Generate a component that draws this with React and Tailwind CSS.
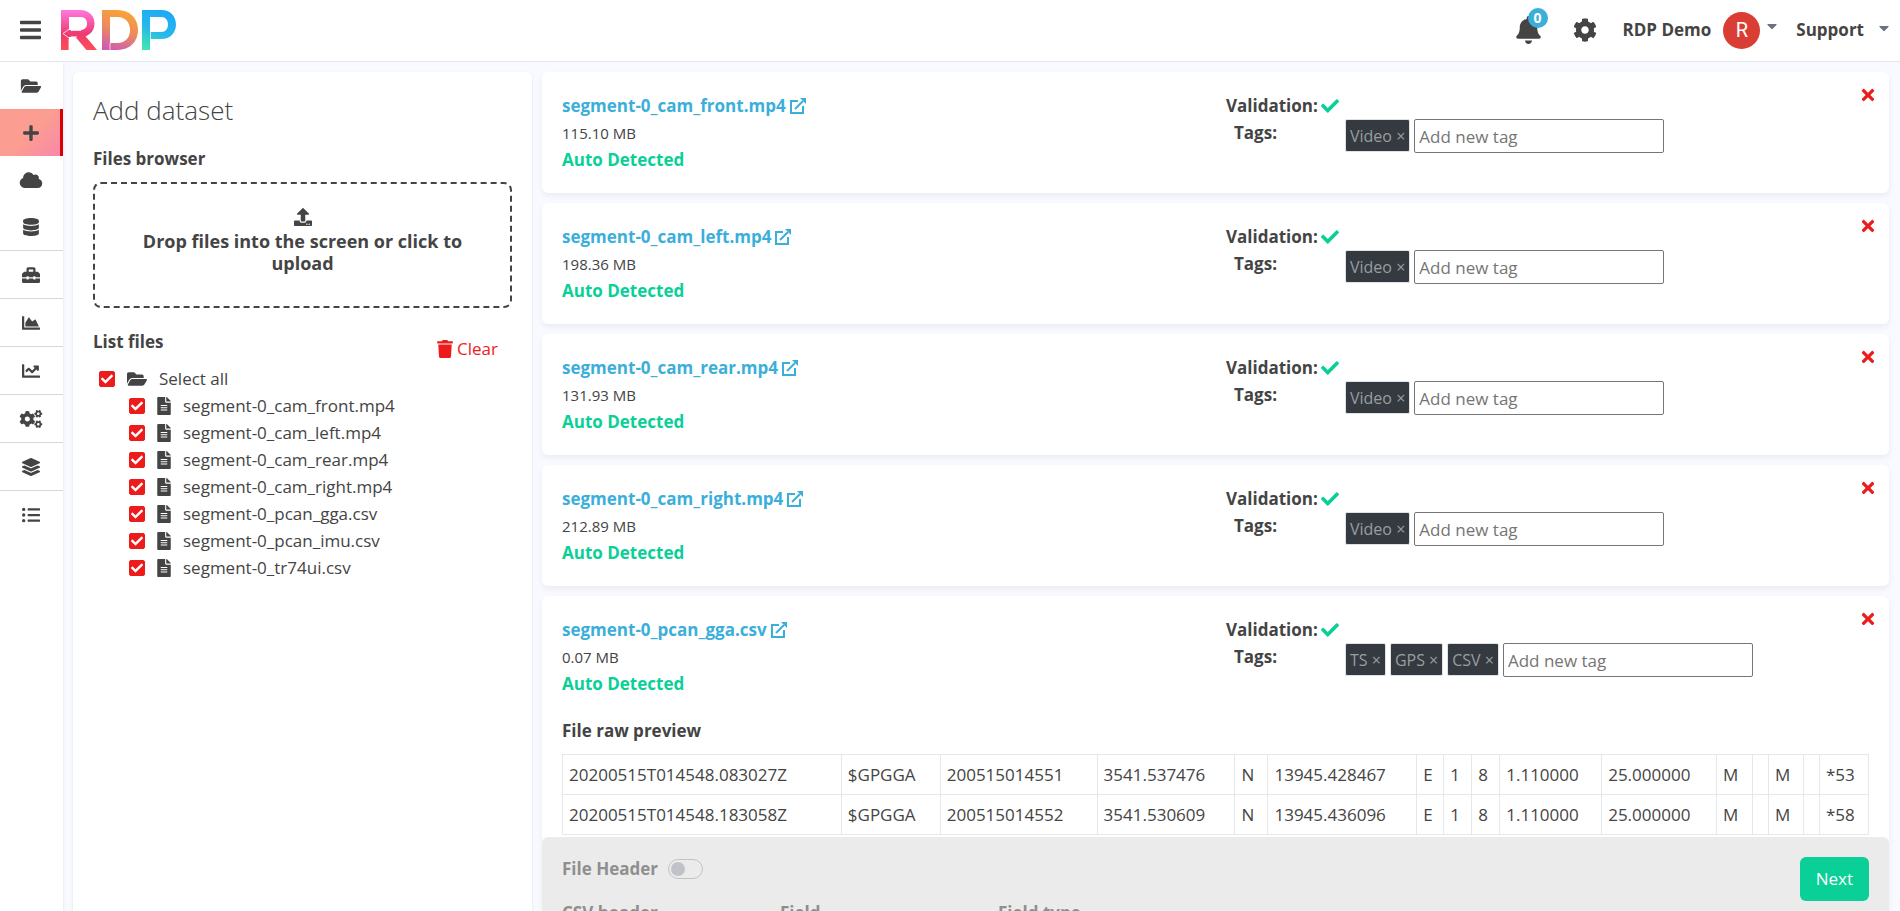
import { useState } from "react";
import {
  FaFolderOpen,
  FaPlus,
  FaCloud,
  FaDatabase,
  FaToolbox,
  FaChartArea,
  FaChartLine,
  FaCogs,
  FaLayerGroup,
  FaListUl,
  FaBars,
  FaBell,
  FaCog,
  FaCaretDown,
  FaUpload,
  FaTrash,
  FaFileAlt,
  FaCheck,
  FaTimes,
} from "react-icons/fa";

const menu = [
  { name: "Datasets", icon: FaFolderOpen },
  { name: "Add dataset", icon: FaPlus, active: true },
  { name: "Cloud", icon: FaCloud },
  { name: "Storage", icon: FaDatabase, line: true },
  { name: "Tools", icon: FaToolbox, line: true },
  { name: "Reports", icon: FaChartArea, line: true },
  { name: "Trends", icon: FaChartLine, line: true },
  { name: "Settings", icon: FaCogs, line: true },
  { name: "Layers", icon: FaLayerGroup, line: true },
  { name: "List", icon: FaListUl },
];

const files = [
  "segment-0_cam_front.mp4",
  "segment-0_cam_left.mp4",
  "segment-0_cam_rear.mp4",
  "segment-0_cam_right.mp4",
  "segment-0_pcan_gga.csv",
  "segment-0_pcan_imu.csv",
  "segment-0_tr74ui.csv",
];

const datasets = [
  { name: "segment-0_cam_front.mp4", size: "115.10 MB", tags: ["Video"] },
  { name: "segment-0_cam_left.mp4", size: "198.36 MB", tags: ["Video"] },
  { name: "segment-0_cam_rear.mp4", size: "131.93 MB", tags: ["Video"] },
  { name: "segment-0_cam_right.mp4", size: "212.89 MB", tags: ["Video"] },
  {
    name: "segment-0_pcan_gga.csv",
    size: "0.07 MB",
    tags: ["TS", "GPS", "CSV"],
    preview: [
      ["20200515T014548.083027Z", "$GPGGA", "200515014551", "3541.537476", "N", "13945.428467", "E", "1", "8", "1.110000", "25.000000", "M", "", "M", "", "*53"],
      ["20200515T014548.183058Z", "$GPGGA", "200515014552", "3541.530609", "N", "13945.436096", "E", "1", "8", "1.110000", "25.000000", "M", "", "M", "", "*58"],
    ],
  },
];

// relative column weights of the raw preview
const columns = [279, 99, 157, 138, 33, 149, 27, 28, 28, 102, 115, 36, 16, 35, 16, 49];

const Logo = () => (
  <svg viewBox="0 0 115 40" className="h-10 w-[115px]" role="img" aria-label="RDP">
    <defs>
      <linearGradient id="r" x1="0" y1="0" x2="0" y2="1">
        <stop offset="0" stopColor="#ff78e0" />
        <stop offset="0.6" stopColor="#ee3a70" />
        <stop offset="1" stopColor="#ff4d55" />
      </linearGradient>
      <linearGradient id="d" x1="0.6" y1="0" x2="0.3" y2="1">
        <stop offset="0" stopColor="#faa434" />
        <stop offset="0.5" stopColor="#ec8a5e" />
        <stop offset="1" stopColor="#cf5cb0" />
      </linearGradient>
      <linearGradient id="p" x1="0.6" y1="0" x2="0.2" y2="1">
        <stop offset="0" stopColor="#1eaaf6" />
        <stop offset="0.5" stopColor="#26b8ea" />
        <stop offset="1" stopColor="#40e4b4" />
      </linearGradient>
    </defs>
    <path fill="url(#r)" fillRule="evenodd" d="M0 0h19.500c8 0 14 5.500 14 13.500 0 6-3.500 10.800-9 12.800L36 40H25.500L14.500 27H8v13H0zM8 7v13h11.500c4 0 6.500-2.600 6.500-6.500S23.500 7 19.500 7z" />
    <path d="M10.500 17.500 2 23.500 10.500 30M10 18v2.500h10M10 30v-3.200h6M8 29v11" fill="none" stroke="#fff" strokeOpacity="0.8" strokeWidth="1" />
    <path fill="url(#d)" fillRule="evenodd" d="M41 0h15.500C69 0 77 8.500 77 20s-8 20-20.500 20H41zM49 7v26h7.500c8 0 12.500-5.500 12.500-13S64.500 7 56.500 7z" />
    <path d="M49 33v7" stroke="#fff" strokeOpacity="0.7" strokeWidth="1" />
    <path fill="url(#p)" fillRule="evenodd" d="M81 0h19.500C109 0 115 6 115 14.500S109 29 100.500 29H89v11h-8zM89 7v15h11.500c4 0 6.500-3.300 6.500-7.500S104.500 7 100.500 7z" />
    <path d="M89.500 22v7" stroke="#fff" strokeOpacity="0.7" strokeWidth="1" />
  </svg>
);

const ExternalLink = () => (
  <svg viewBox="0 0 16 16" className="size-4" fill="none" stroke="currentColor" strokeWidth="2">
    <path d="M8 3H1v12h12V8" />
    <path d="M5 11 13 3" />
    <path d="M10 0h6v6z" fill="currentColor" stroke="none" />
  </svg>
);

const CheckBox = ({ id, checked, onChange }) => (
  <span className="relative flex size-4">
    <input
      id={id}
      type="checkbox"
      checked={checked}
      onChange={onChange}
      className="peer size-4 appearance-none rounded-xs border border-[#ed1c1c] checked:bg-[#ed1c1c]"
    />
    <FaCheck className="pointer-events-none absolute left-[2px] top-[2px] hidden size-3 text-white peer-checked:block" />
  </span>
);

const Header = () => (
  <header className="flex h-[62px] shrink-0 items-center justify-between border-b border-[#e6e8ec] bg-white pb-px pl-5 pr-2">
    <div className="flex items-center gap-5">
      <button type="button" aria-label="Toggle menu">
        <FaBars className="h-6 w-[21px]" />
      </button>
      <a href="#">
        <Logo />
      </a>
    </div>
    <div className="flex items-center font-bold">
      <button type="button" aria-label="Notifications" className="relative mr-8">
        <FaBell className="h-7 w-[25px]" />
        <span className="absolute -top-2 left-3 flex size-5 items-center justify-center rounded-full bg-[#3bafda] text-sm text-white">
          0
        </span>
      </button>
      <button type="button" aria-label="Settings" className="mr-[26px]">
        <FaCog className="size-6" />
      </button>
      <button type="button" className="mr-4 flex items-center">
        RDP Demo
        <span className="ml-3 mr-1 flex size-[37px] items-center justify-center rounded-full bg-[#d93d34] font-['Roboto',sans-serif] text-xl font-normal text-white">
          R
        </span>
        <FaCaretDown className="mb-2 size-4 text-gray-500" />
      </button>
      <button type="button" className="flex items-center gap-3">
        Support
        <FaCaretDown className="mb-1 size-4 text-gray-500" />
      </button>
    </div>
  </header>
);

const Sidebar = () => (
  <nav className="w-[63px] shrink-0 bg-white shadow-sm">
    {menu.map(({ name, icon: Icon, active, line }) => (
      <a
        key={name}
        href="#"
        aria-label={name}
        className={`flex items-center justify-center pr-px ${line ? "h-12 border-b border-[#d5d7da]" : "h-[47px]"} ${
          active ? "bg-linear-135 from-[#fb9d90] from-50% to-[#f886ab] shadow-[inset_-3px_0_#d80000]" : ""
        }`}
      >
        <Icon className="h-[18px] w-6" />
      </a>
    ))}
  </nav>
);

const FilesPanel = () => {
  const [selected, setSelected] = useState(files);
  const all = selected.length === files.length;

  const toggle = (file) =>
    setSelected(selected.includes(file) ? selected.filter((f) => f !== file) : [...selected, file]);

  return (
    <section className="w-[459px] shrink-0 rounded-t-md bg-white px-5 pt-5 shadow-sm">
      <h1 className="text-[26px] leading-9 font-light">Add dataset</h1>
      <h2 className="mt-5 font-bold leading-[22px]">Files browser</h2>
      <button
        type="button"
        className="mt-3 flex h-[126px] w-full flex-col items-center rounded-lg border-2 border-dashed border-[#444] px-10 pt-6 text-lg font-bold leading-[22px]"
      >
        <FaUpload className="mb-1 size-[18px] shrink-0" />
        Drop files into the screen or click to upload
      </button>

      <div className="mt-5 flex justify-between pr-[14px]">
        <h2 className="font-bold leading-7">List files</h2>
        <button type="button" onClick={() => setSelected([])} className="mt-2 flex items-center gap-1 text-[#ed1c1c]">
          <FaTrash className="h-[18px] w-4" />
          Clear
        </button>
      </div>

      <div className="mt-1 flex h-[27px] items-center pl-[6px]">
        <CheckBox id="select-all" checked={all} onChange={() => setSelected(all ? [] : files)} />
        <FaFolderOpen className="ml-3 h-[18px] w-5" />
        <label htmlFor="select-all" className="ml-3">Select all</label>
      </div>
      <ul className="pl-9">
        {files.map((file) => (
          <li key={file} className="flex h-[27px] items-center">
            <CheckBox id={file} checked={selected.includes(file)} onChange={() => toggle(file)} />
            <FaFileAlt className="ml-3 h-[18px] w-[14px]" />
            <label htmlFor={file} className="ml-3">{file}</label>
          </li>
        ))}
      </ul>
    </section>
  );
};

const CsvPreview = ({ rows }) => (
  <>
    <h3 className="font-bold leading-7">File raw preview</h3>
    <table className="mt-[9px] w-full table-fixed border-collapse">
      <colgroup>
        {columns.map((w, i) => (
          <col key={i} style={{ width: `${(w / 1307) * 100}%` }} />
        ))}
      </colgroup>
      <tbody>
        {rows.map((row) => (
          <tr key={row[0]} className="h-10">
            {row.map((cell, i) => (
              <td key={i} className="border border-[#e4e8eb] pl-[6px] whitespace-nowrap">{cell}</td>
            ))}
          </tr>
        ))}
      </tbody>
    </table>
  </>
);

const DatasetCard = ({ data }) => (
  <article
    className={`relative min-h-[121px] rounded-md bg-white px-5 pt-5 shadow-[0_3px_6px_rgba(0,0,0,0.06)] ${
      data.preview ? "flex-1" : "shrink-0"
    }`}
  >
    <button type="button" aria-label={`Remove ${data.name}`} className="absolute right-3 top-[14px] text-[#ed1c1c]">
      <FaTimes className="h-[18px] w-auto" />
    </button>
    <div className="flex h-[101px]">
      <div className="w-[664px]">
        <a href="#" className="flex items-center gap-1 font-bold leading-7 text-[#3bafda]">
          {data.name}
          <ExternalLink />
        </a>
        <p className="text-[15px] leading-[27px]">{data.size}</p>
        <p className="font-bold leading-[26px] text-[#0acf97]">Auto Detected</p>
      </div>
      <div>
        <p className="flex items-center gap-[3px] font-bold leading-[27px]">
          Validation:
          <FaCheck className="size-[18px] text-[#0acf97]" />
        </p>
        <div className="flex pl-2">
          <label htmlFor={`tag-${data.name}`} className="w-[111px] font-bold leading-7">Tags:</label>
          <div className="flex items-start gap-1">
            {data.tags.map((tag) => (
              <button
                key={tag}
                type="button"
                className="h-[33px] rounded-xs border border-[#dee2e6] bg-[#343a40] px-1 text-base text-[#9a9da0]"
              >
                {tag} ×
              </button>
            ))}
            <input
              id={`tag-${data.name}`}
              type="text"
              placeholder="Add new tag"
              className="h-[34px] w-[250px] rounded-xs border border-[#767676] px-1 placeholder:text-[#757575]"
            />
          </div>
        </div>
      </div>
    </div>
    {data.preview && <CsvPreview rows={data.preview} />}
  </article>
);

const HeaderOptions = () => (
  <footer className="absolute inset-x-0 bottom-0 h-[74px] overflow-hidden rounded-t-md bg-[#ebebeb] px-5 pt-5 font-bold text-[#8f8f8f]">
    <div className="flex items-start justify-between">
      <div className="flex items-center gap-[10px] leading-6">
        <label htmlFor="file-header">File Header</label>
        <input
          id="file-header"
          type="checkbox"
          disabled
          className="h-5 w-[35px] appearance-none rounded-full border border-[#bfc3c8] before:m-[2px] before:block before:size-[14px] before:rounded-full before:bg-[#bfc3c8]"
        />
      </div>
      <button type="button" className="-mb-5 h-11 rounded-md bg-[#0acf97] px-4 font-normal text-white">
        Next
      </button>
    </div>
    <div className="mt-5 grid w-[654px] grid-cols-3 leading-6">
      <span>CSV header</span>
      <span>Field</span>
      <span>Field type</span>
    </div>
  </footer>
);

export default function App() {
  return (
    <div className="flex h-screen flex-col overflow-hidden bg-[#f9faff] font-['Open_Sans','Noto_Sans',sans-serif] text-[17px] text-[#444]">
      <Header />
      <div className="flex min-h-0 flex-1">
        <Sidebar />
        <main className="flex min-w-0 flex-1 gap-[10px] pl-[10px] pr-[11px] pt-[10px]">
          <FilesPanel />
          <div className="relative flex min-w-0 flex-1 flex-col gap-[10px]">
            {datasets.map((d) => (
              <DatasetCard key={d.name} data={d} />
            ))}
            <HeaderOptions />
          </div>
        </main>
      </div>
    </div>
  );
}
